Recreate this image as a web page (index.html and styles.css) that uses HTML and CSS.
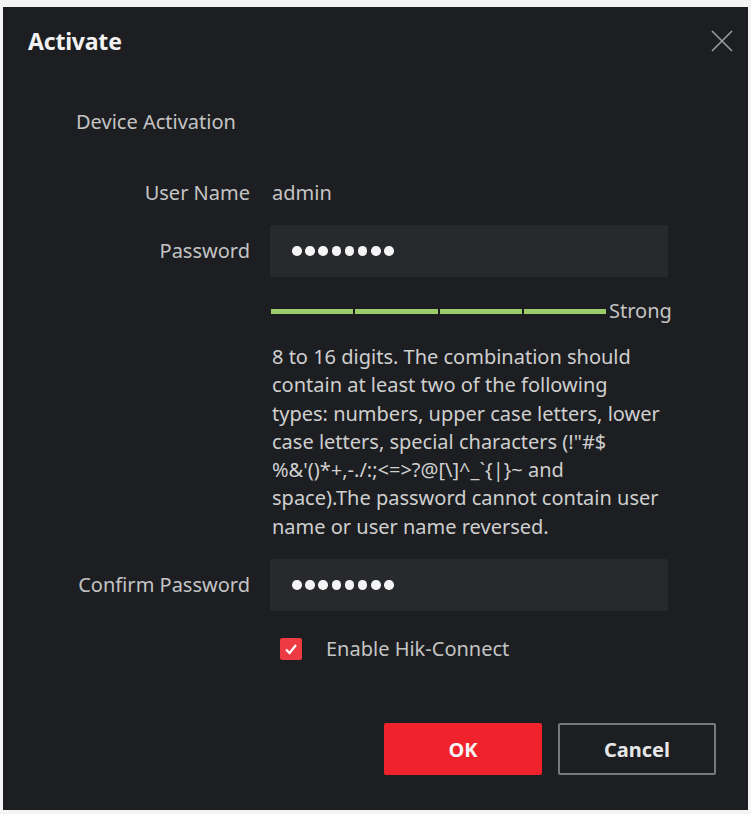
FILE: index.html
```html
<!DOCTYPE html>
<html>
<head>
    <meta charset="utf-8">
    <title>Activate</title>
    <link rel="stylesheet" href="styles.css">
</head>
<body>
    <div class="dialog">
        <div class="dialog-header">
            <h2>Activate</h2>
            <span class="close">
                <svg width="22" height="22" viewBox="0 0 22 22">
                    <path d="M1 1 L21 21 M21 1 L1 21" stroke="#9a9c9f" stroke-width="1.6" fill="none"/>
                </svg>
            </span>
        </div>

        <div class="section-title">Device Activation</div>

        <div class="form">
            <div class="row">
                <label>User Name</label>
                <div class="value">admin</div>
            </div>

            <div class="row pw-row">
                <label>Password</label>
                <div class="input">
                    <span class="dots"><i></i><i></i><i></i><i></i><i></i><i></i><i></i><i></i></span>
                </div>
            </div>

            <div class="row strength-row">
                <div></div>
                <div class="strength">
                    <div class="bar">
                        <span></span><span></span><span></span><span></span>
                    </div>
                    <span class="strength-label">Strong</span>
                </div>
            </div>

            <div class="row hint-row">
                <div></div>
                <p class="hint">8 to 16 digits. The combination should contain at least two of the following types: numbers, upper case letters, lower case letters, special characters (!"#$ %&amp;'()*+,-./:;&lt;=&gt;?@[\]^_`{|}~ and<br>space).The password cannot contain user name or user name reversed.</p>
            </div>

            <div class="row confirm-row">
                <label>Confirm Password</label>
                <div class="input">
                    <span class="dots"><i></i><i></i><i></i><i></i><i></i><i></i><i></i><i></i></span>
                </div>
            </div>

            <div class="row check-row">
                <div></div>
                <div class="check">
                    <span class="checkbox">
                        <svg width="14" height="12" viewBox="0 0 14 12">
                            <path d="M2 6.5 L5.5 10 L12 2" stroke="#fff" stroke-width="2.2" fill="none"/>
                        </svg>
                    </span>
                    <span>Enable Hik-Connect</span>
                </div>
            </div>
        </div>

        <div class="buttons">
            <button class="btn btn-ok">OK</button>
            <button class="btn btn-cancel">Cancel</button>
        </div>
    </div>
</body>
</html>
```

FILE: styles.css
```css
body {
    margin: 0;
    background: #f4f4f4;
    font-family: "Noto Sans", "Open Sans", sans-serif;
}

.dialog {
    margin: 7px 3px 0 3px;
    height: 803px;
    background: #1c1e21;
    color: #c4c4c4;
    display: flex;
    flex-direction: column;
    box-sizing: border-box;
}

.dialog-header {
    height: 68px;
    padding: 0 15px 0 25px;
    display: flex;
    align-items: center;
    justify-content: space-between;
}

.dialog-header h2 {
    margin: 0;
    font-size: 23px;
    font-weight: bold;
    color: #f2f2f2;
    letter-spacing: -0.2px;
}

.close {
    display: flex;
}

.section-title {
    margin: 33px 0 0 73px;
    font-size: 20px;
    line-height: 28px;
    color: #c4c4c4;
}

.form {
    margin-top: 43px;
    display: flex;
    flex-direction: column;
}

.row {
    display: grid;
    grid-template-columns: 247px 398px;
    column-gap: 20px;
    align-items: center;
    font-size: 20px;
    line-height: 28px;
}

.row label {
    text-align: right;
    color: #c4c4c4;
}

.value {
    padding-left: 2px;
}

.input {
    height: 52px;
    background: #27292d;
    border-radius: 2px;
    padding-left: 22px;
    display: flex;
    align-items: center;
}

.dots {
    display: flex;
    gap: 3.7px;
}

.dots i {
    width: 9.5px;
    height: 9.5px;
    border-radius: 50%;
    background: #f4f4f4;
}

.row.pw-row {
    margin-top: 18px;
}

.row.strength-row {
    margin-top: 20px;
}

.strength {
    display: flex;
    align-items: center;
    padding-left: 1px;
    width: 420px;
}

.bar {
    display: flex;
    gap: 2px;
    width: 335px;
}

.bar span {
    flex: 1;
    height: 5px;
    background: #9ccb6b;
}

.strength-label {
    margin-left: 3px;
    color: #c4c4c4;
}

.row.hint-row {
    margin-top: 18px;
}

.hint {
    margin: 0;
    padding-left: 2px;
    line-height: 28.3px;
    color: #cfcfcf;
}

.row.confirm-row {
    margin-top: 18px;
}

.row.check-row {
    margin-top: 24px;
}

.check {
    display: flex;
    align-items: center;
    gap: 24px;
    padding-left: 10px;
    color: #c4c4c4;
}

.checkbox {
    width: 22px;
    height: 22px;
    background: #ee3a42;
    border-radius: 2px;
    display: flex;
    align-items: center;
    justify-content: center;
}

.buttons {
    margin-top: auto;
    margin-bottom: 35px;
    display: flex;
    justify-content: flex-end;
    gap: 16px;
    padding-right: 32px;
}

.btn {
    width: 158px;
    height: 52px;
    border-radius: 2px;
    font-family: "Noto Sans", "Open Sans", sans-serif;
    font-size: 20px;
    font-weight: bold;
    cursor: pointer;
}

.btn-ok {
    background: #f0222b;
    border: none;
    color: #f6f6f6;
}

.btn-cancel {
    background: #1c1e21;
    border: 2px solid #76787b;
    color: #e6e6e6;
}
```
